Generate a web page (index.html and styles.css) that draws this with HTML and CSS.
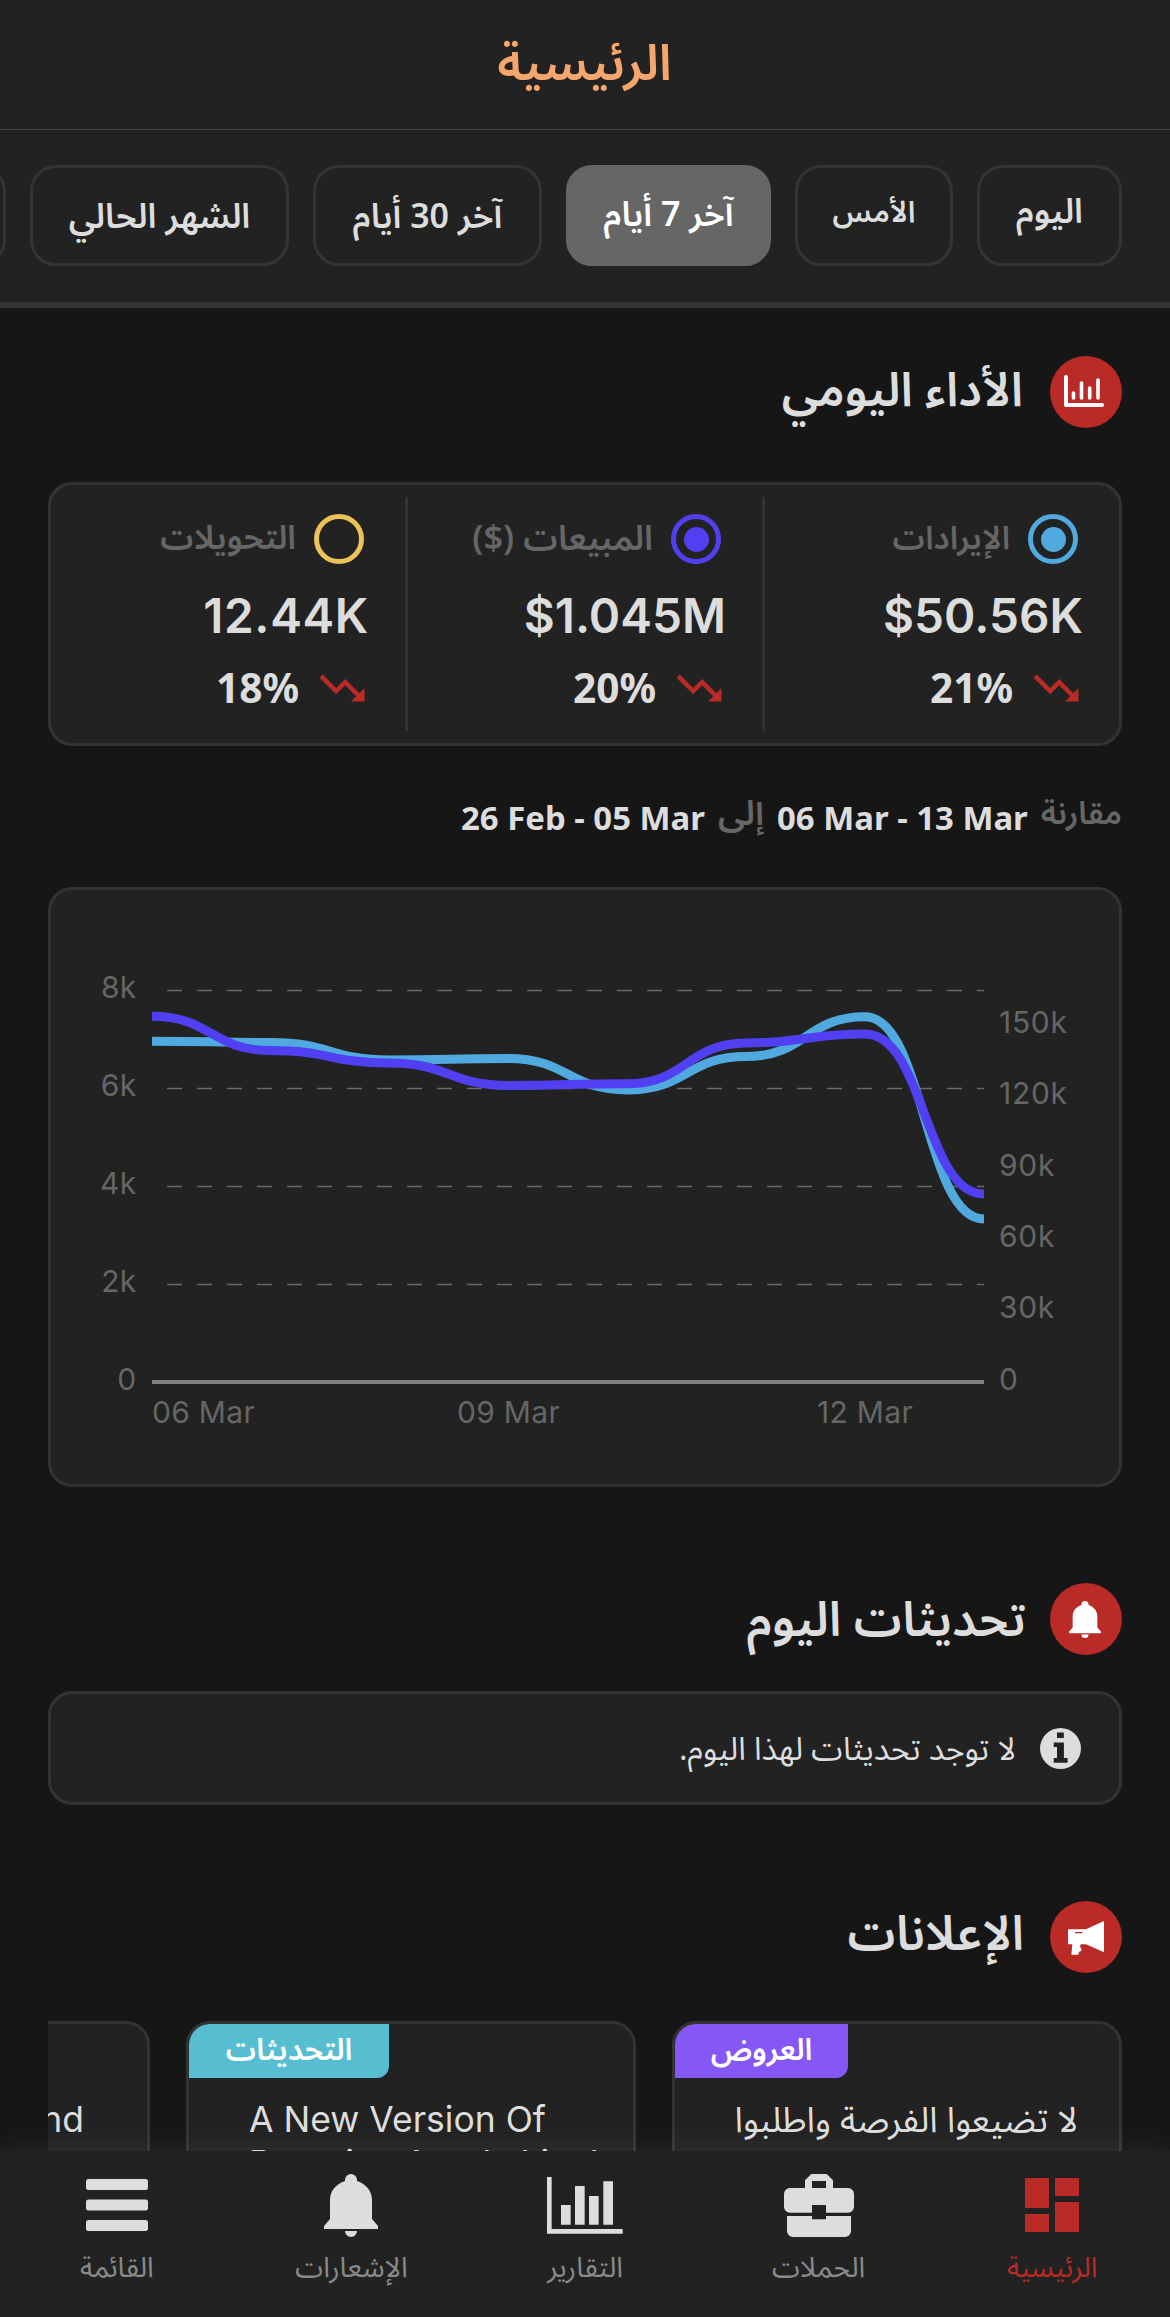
FILE: index.html
```
<!DOCTYPE html>
<html lang="ar" dir="rtl">
<head>
<meta charset="utf-8">
<title>الرئيسية</title>
<link rel="stylesheet" href="styles.css">
</head>
<body>
<div class="screen">
  <header class="header"><h1 class="header-title">الرئيسية</h1></header>

  <div class="filters">
    <button class="pill pill-today">اليوم</button>
    <button class="pill pill-yesterday">الأمس</button>
    <button class="pill pill-week active">آخر 7 أيام</button>
    <button class="pill pill-month">آخر 30 أيام</button>
    <button class="pill pill-current">الشهر الحالي</button>
    <button class="pill pill-last"></button>
  </div>

  <main class="content">
    <div class="section-head">
      <span class="section-icon">
        <svg viewBox="0 0 72 72"><path d="M16 21v28h36" fill="none" stroke="#fff" stroke-width="4" stroke-linecap="round" stroke-linejoin="round"/><path d="M23.5 37v5M31.5 27v15M39.7 32v10M48 24v18" stroke="#fff" stroke-width="3.6" stroke-linecap="round"/></svg>
      </span>
      <h2 class="section-title">الأداء اليومي</h2>
    </div>

    <section class="stats">
      <div class="stat">
        <div class="stat-label label-revenue"><i class="radio radio-blue on"></i><span>الإيرادات</span></div>
        <div class="stat-value" dir="ltr">$50.56K</div>
        <div class="stat-trend"><svg class="trend" viewBox="0 0 24 24"><path d="M16 18l2.29-2.29-4.88-4.88-4 4L2 7.41 3.41 6l6 6 4-4 6.3 6.29L22 12v6z"/></svg><span dir="ltr">21%</span></div>
      </div>
      <div class="stat">
        <div class="stat-label label-sales"><i class="radio radio-purple on"></i><span>المبيعات ($)</span></div>
        <div class="stat-value" dir="ltr">$1.045M</div>
        <div class="stat-trend"><svg class="trend" viewBox="0 0 24 24"><path d="M16 18l2.29-2.29-4.88-4.88-4 4L2 7.41 3.41 6l6 6 4-4 6.3 6.29L22 12v6z"/></svg><span dir="ltr">20%</span></div>
      </div>
      <div class="stat">
        <div class="stat-label"><i class="radio radio-yellow"></i><span>التحويلات</span></div>
        <div class="stat-value spaced" dir="ltr">12.44K</div>
        <div class="stat-trend"><svg class="trend" viewBox="0 0 24 24"><path d="M16 18l2.29-2.29-4.88-4.88-4 4L2 7.41 3.41 6l6 6 4-4 6.3 6.29L22 12v6z"/></svg><span dir="ltr">18%</span></div>
      </div>
    </section>

    <div class="compare">
      <span class="compare-word">مقارنة</span>
      <b class="compare-range" dir="ltr">06 Mar - 13 Mar</b>
      <span class="compare-word compare-to">إلى</span>
      <b class="compare-range" dir="ltr">26 Feb - 05 Mar</b>
    </div>

    <section class="chart-card" dir="ltr">
      <svg class="chart" viewBox="51 890 1068 594">
        <g class="grid">
          <path d="M167 990.5H984M167 1088.5H984M167 1186.5H984M167 1284.5H984"/>
        </g>
        <path class="axis" d="M152 1382H984"/>
        <path class="line line-blue" d="M152 1041.2C211.4 1041.2 211.4 1042.5 270.9 1042.5S330.3 1060 389.7 1060S449.1 1058.5 508.6 1058.5S568 1090 627.4 1090S686.9 1056.5 746.3 1056.5S805.7 1016.8 865.1 1016.8S924.6 1219 984 1219"/>
        <path class="line line-purple" d="M152 1016.3C211.4 1016.3 211.4 1050.6 270.9 1050.6S330.3 1063 389.7 1063S449.1 1085.5 508.6 1085.5S568 1083.7 627.4 1083.7S686.9 1043 746.3 1043S805.7 1034 865.1 1034S924.6 1194 984 1194"/>
        <g class="tick tick-end">
          <text x="136.500" y="998">8k</text><text x="136.500" y="1096">6k</text><text x="136.500" y="1194">4k</text><text x="136.500" y="1292">2k</text><text x="136.500" y="1390">0</text>
        </g>
        <g class="tick tick-wide">
          <text x="999" y="1033">150k</text><text x="999" y="1104">120k</text><text x="999" y="1175.500">90k</text><text x="999" y="1246.500">60k</text><text x="999" y="1318">30k</text><text x="999" y="1389.500">0</text>
        </g>
        <g class="tick">
          <text x="152" y="1423">06 Mar</text><text x="457" y="1423">09 Mar</text><text x="817" y="1423">12 Mar</text>
        </g>
      </svg>
    </section>

    <div class="section-head head-updates">
      <span class="section-icon">
        <svg class="bell-small" viewBox="0 0 54 63"><path fill="#fff" d="M27 0a6 6 0 0 1 6 6v1c9 3 15 10 15 19v19l6 7v3H0v-3l6-7V26C6 17 12 10 21 7V6a6 6 0 0 1 6-6zM21 57h12a6 6 0 0 1-12 0z"/></svg>
      </span>
      <h2 class="section-title">تحديثات اليوم</h2>
    </div>

    <section class="notice">
      <svg class="notice-icon" viewBox="0 0 41 41"><circle cx="20.500" cy="20.500" r="20.500" fill="#ddd"/><path fill="#222" d="M17 4.500h6.800v5.500H17zM13.700 14.500h10.200v15.500h3.700v4.700H13.700v-4.700H17v-11h-3.300z"/></svg>
      <span class="notice-text">لا توجد تحديثات لهذا اليوم.</span>
    </section>

    <div class="section-head head-ads">
      <span class="section-icon">
        <svg viewBox="30 33 216 216"><path fill="#fff" fill-rule="evenodd" d="M84 118h54l54-25v94l-54-24h-16l-2 9 4 3v8l-7 2-2 9H94l3-31H84zM105 126v4h22v-4z"/></svg>
      </span>
      <h2 class="section-title">الإعلانات</h2>
    </div>

    <section class="cards">
      <article class="card card-offer">
        <span class="badge badge-purple">العروض</span>
        <p class="card-text">لا تضيعوا الفرصة واطلبوا<br>حملتكم من المتجر</p>
      </article>
      <article class="card card-update">
        <span class="badge badge-teal">التحديثات</span>
        <p class="card-text latin" dir="ltr">A New Version Of<br>Boostiny App Is Live!</p>
      </article>
      <article class="card card-more">
        <p class="card-text latin" dir="ltr">Brand</p>
      </article>
    </section>
  </main>

  <nav class="tabbar">
    <a class="tab current"><span class="tab-icon"><svg width="54" height="54" viewBox="0 0 54 54"><path d="M0 0h24v30H0zM0 36h24v18H0zM30 0h24v18H30zM30 24h24v30H30z"/></svg></span><span>الرئيسية</span></a>
    <a class="tab"><span class="tab-icon"><svg width="70" height="63" viewBox="249 162 210 189"><path fill-rule="evenodd" d="M312 204v-23l19-19h46l19 19v23h45a18 18 0 0 1 18 18v38a18 18 0 0 1-18 18h-66v-23h-42v23h-66a18 18 0 0 1-18-18v-38a18 18 0 0 1 18-18zM333 183v21h42v-21zM258 288h75v10h42v-10h75v45a18 18 0 0 1-18 18H276a18 18 0 0 1-18-18z"/></svg></span><span>الحملات</span></a>
    <a class="tab"><span class="tab-icon"><svg width="76" height="57" viewBox="48 51 228 171"><path d="M48 51h14v156h213v14H48zM90 135h29v59H90zM132 78h29v116h-29zM174 108h29v86h-29zM217 64h29v130h-29z"/></svg></span><span>التقارير</span></a>
    <a class="tab"><span class="tab-icon"><svg width="54" height="63" viewBox="0 0 54 63"><path d="M27 0a6 6 0 0 1 6 6v1c9 3 15 10 15 19v19l6 7v3H0v-3l6-7V26C6 17 12 10 21 7V6a6 6 0 0 1 6-6zM21 57h12a6 6 0 0 1-12 0z"/></svg></span><span>الإشعارات</span></a>
    <a class="tab tab-menu"><span class="tab-icon"><svg width="62" height="52" viewBox="0 0 62 52"><rect width="62" height="11" rx="2.500"/><rect y="20.500" width="62" height="11" rx="2.500"/><rect y="41" width="62" height="11" rx="2.500"/></svg></span><span>القائمة</span></a>
  </nav>
</div>
</body>
</html>
```
FILE: styles.css
```
* { box-sizing: border-box; margin: 0; padding: 0; }

body {
  background: #161616;
  color: #ddd;
  font-family: "Noto Sans Arabic", "Noto Sans", sans-serif;
}

.screen {
  position: relative;
  width: 1170px;
  height: 2317px;
  overflow: hidden;
}

.screen svg { display: block; }

/* Header */
.header {
  display: flex;
  align-items: center;
  justify-content: center;
  height: 130px;
  padding-top: 1px;
  padding-right: 1px;
  background: #222;
  border-bottom: 1px solid #424242;
}

.header-title {
  color: #f4a66c;
  font-size: 49.600px;
  font-weight: 600;
  line-height: 1;
}

/* Date filters */
.filters {
  display: flex;
  gap: 24px;
  height: 178px;
  padding: 35px 48px 36px;
  overflow: hidden;
  background: #222;
  border-bottom: 6px solid #353535;
}

.pill {
  display: flex;
  flex: none;
  align-items: center;
  justify-content: center;
  height: 101px;
  border: 3px solid #343434;
  border-radius: 26px;
  background: #222;
  color: #ddd;
  font: 600 34px/1 "Noto Sans Arabic", "Noto Sans", sans-serif;
}

.pill-today { width: 145px; padding-bottom: 8px; }
.pill-yesterday { width: 158px; padding-bottom: 6px; font-size: 29.500px; }
.pill-week { width: 205px; padding-bottom: 2px; }
.pill-month { width: 229px; padding-top: 3px; }
.pill-current { width: 259px; padding-top: 3px; font-size: 34.300px; }
.pill-last { width: 259px; }

.pill.active {
  border-color: #666;
  background: #666;
  color: #fff;
}

/* Content */
.content { padding: 48px 48px 0; }

.section-head {
  display: flex;
  align-items: center;
  gap: 27px;
  height: 72px;
}

.section-icon {
  display: flex;
  align-items: center;
  justify-content: center;
  width: 72px;
  height: 72px;
  border-radius: 50%;
  background: #ba2a26;
}

.bell-small { width: 32px; height: 37px; margin-right: 2px; }

.section-title {
  font-size: 47.100px;
  font-weight: 600;
  line-height: 1;
}

/* Stats */
.stats {
  display: grid;
  grid-template-columns: 357px 357px 1fr;
  height: 264px;
  margin-top: 54px;
  padding: 12px 0;
  border: 3px solid #333;
  border-radius: 24px;
  background: #222;
}

.stat {
  padding: 17px 36px 0 0;
  border-left: 3px solid #333;
}

.stat:last-child { border-left: 0; }

.stat-label {
  display: flex;
  align-items: center;
  gap: 18px;
  height: 50px;
  padding-right: 5px;
  color: #666;
  font-size: 33.200px;
  font-weight: 600;
  line-height: 1;
}

.label-revenue { font-size: 32.200px; }
.label-sales { font-size: 34.400px; }

.radio {
  display: flex;
  align-items: center;
  justify-content: center;
  width: 50px;
  height: 50px;
  border: 5px solid;
  border-radius: 50%;
}

.radio.on::after {
  content: "";
  width: 25px;
  height: 25px;
  border-radius: 50%;
  background: currentColor;
}

.radio-blue { color: #50aadf; }
.radio-purple { color: #5140f2; }
.radio-yellow { color: #ecc358; }

.stat-value {
  margin-top: 22px;
  font: 600 47.700px/60px Inter, sans-serif;
  text-align: right;
}

.stat-value.spaced { letter-spacing: 0.600px; }

.stat-trend {
  display: flex;
  align-items: center;
  gap: 16px;
  height: 54px;
  margin-top: 15px;
  font: 700 40.600px/54px "Noto Sans", sans-serif;
}

.trend { width: 54px; height: 54px; fill: #ba2a26; }

/* Comparison */
.compare {
  display: flex;
  align-items: center;
  gap: 13px;
  height: 46px;
  margin: 49px 0 46px;
}

.compare-word {
  padding-bottom: 7px;
  color: #666;
  font-size: 31.500px;
  font-weight: 600;
  line-height: 1;
}

.compare-to { font-size: 35px; }

.compare-range { font: 700 32.900px/46px "Noto Sans", sans-serif; }

/* Chart */
.chart-card {
  height: 600px;
  border: 3px solid #333;
  border-radius: 24px;
  background: #222;
}

.chart { width: 1068px; height: 594px; }
.grid path { stroke: #6a6a6a; stroke-width: 1.700; stroke-dasharray: 15 15; }
.axis { stroke: #808080; stroke-width: 4; }
.line { fill: none; stroke-width: 9; }
.line-blue { stroke: #50aadf; }
.line-purple { stroke: #5140f2; }
.tick { fill: #666; font: 400 30px Inter, sans-serif; letter-spacing: 0.300px; }
.tick-end { text-anchor: end; }
.tick-wide { letter-spacing: 0.700px; }

/* Updates */
.head-updates { gap: 24px; margin-top: 96px; }
.head-updates .section-title { padding-top: 3px; font-size: 48px; }

.notice {
  display: flex;
  align-items: center;
  gap: 24px;
  height: 114px;
  margin-top: 36px;
  padding-right: 38px;
  border: 3px solid #333;
  border-radius: 24px;
  background: #222;
}

.notice-icon { width: 41px; height: 41px; }

.notice-text {
  padding-top: 5px;
  font-size: 31.900px;
  line-height: 1;
}

/* Announcements */
.head-ads { gap: 26px; margin-top: 96px; }
.head-ads .section-title { padding-bottom: 5px; font-size: 48px; }

.cards {
  display: flex;
  gap: 36px;
  margin-top: 48px;
  overflow: hidden;
}

.card {
  display: flex;
  flex: none;
  flex-direction: column;
  align-items: flex-end;
  width: 450px;
  height: 400px;
  border: 3px solid #333;
  border-radius: 24px;
  background: #222;
  overflow: hidden;
}

.badge {
  display: flex;
  align-items: center;
  justify-content: center;
  height: 54px;
  border-bottom-right-radius: 12px;
  color: #fff;
  font-size: 30.200px;
  font-weight: 600;
  line-height: 1;
}

.badge-purple { width: 173px; background: #8557f5; }
.badge-teal { width: 200px; background: #57bdd1; }

.card-text {
  width: 100%;
  margin-top: 21px;
  padding: 0 41px;
  font-size: 35.500px;
  line-height: 43.500px;
}

.card-text.latin {
  margin-top: 20px;
  padding-left: 60px;
  padding-right: 0;
  font-family: Inter, sans-serif;
}

.card-more .card-text {
  margin-top: 74px;
  padding: 0 63px;
  text-align: right;
}

/* Bottom navigation, floats over the scrolled content */
.tabbar {
  position: absolute;
  right: 0;
  bottom: 0;
  left: 0;
  display: flex;
  height: 166px;
  padding-right: 1px;
  background: #222;
  box-shadow: 0 0 30px rgba(255, 255, 255, 0.09);
}

.tab {
  display: flex;
  flex: 1;
  flex-direction: column;
  align-items: center;
  padding-top: 22px;
  color: #8a8a8a;
  font-size: 28.200px;
  line-height: 40px;
}

.tab-icon {
  display: flex;
  align-items: center;
  justify-content: center;
  height: 64px;
  margin-bottom: 11px;
  fill: #ddd;
}

.tab-menu { padding-right: 1px; }

.tab.current { color: #ba2a26; }
.tab.current .tab-icon { fill: #ba2a26; }
```
